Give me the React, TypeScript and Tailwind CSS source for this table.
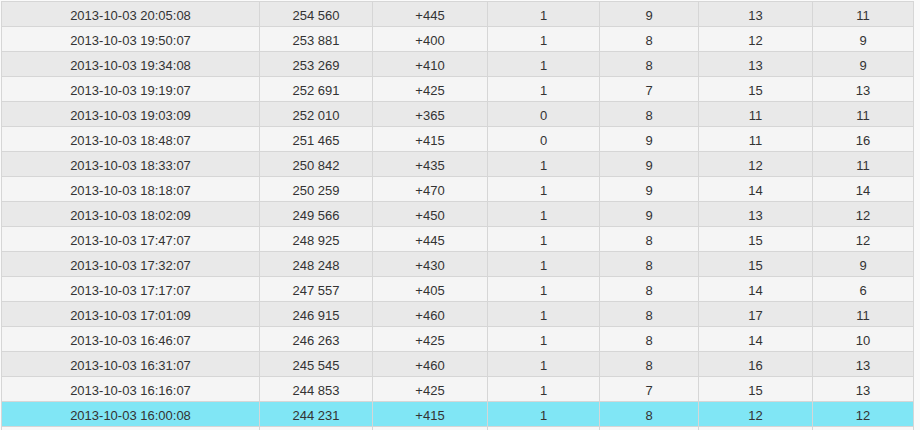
const ROWS: string[][] = [
  ["2013-10-03 20:05:08", "254 560", "+445", "1", "9", "13", "11"],
  ["2013-10-03 19:50:07", "253 881", "+400", "1", "8", "12", "9"],
  ["2013-10-03 19:34:08", "253 269", "+410", "1", "8", "13", "9"],
  ["2013-10-03 19:19:07", "252 691", "+425", "1", "7", "15", "13"],
  ["2013-10-03 19:03:09", "252 010", "+365", "0", "8", "11", "11"],
  ["2013-10-03 18:48:07", "251 465", "+415", "0", "9", "11", "16"],
  ["2013-10-03 18:33:07", "250 842", "+435", "1", "9", "12", "11"],
  ["2013-10-03 18:18:07", "250 259", "+470", "1", "9", "14", "14"],
  ["2013-10-03 18:02:09", "249 566", "+450", "1", "9", "13", "12"],
  ["2013-10-03 17:47:07", "248 925", "+445", "1", "8", "15", "12"],
  ["2013-10-03 17:32:07", "248 248", "+430", "1", "8", "15", "9"],
  ["2013-10-03 17:17:07", "247 557", "+405", "1", "8", "14", "6"],
  ["2013-10-03 17:01:09", "246 915", "+460", "1", "8", "17", "11"],
  ["2013-10-03 16:46:07", "246 263", "+425", "1", "8", "14", "10"],
  ["2013-10-03 16:31:07", "245 545", "+460", "1", "8", "16", "13"],
  ["2013-10-03 16:16:07", "244 853", "+425", "1", "7", "15", "13"],
  ["2013-10-03 16:00:08", "244 231", "+415", "1", "8", "12", "12"],
  ["", "", "", "", "", "", ""],
];

const COL_W = ["w-[258px]", "w-[113px]", "w-[115px]", "w-[112px]", "w-[99px]", "w-[114px]", "w-[101px]"];

export default function App() {
  return (
    <div className="w-[920px] h-[430px] overflow-hidden bg-[#fafafa] pt-px pl-px font-['Liberation_Sans',Arial,sans-serif] text-[13px] text-[#333]">
      <div className="w-[913px] border-l border-t border-[#d6d6d6]">
        {ROWS.map((r, i) => {
          const bg = i === 16 ? "bg-[#80e6f5]" : i === 17 ? "bg-[#f8f8f8]" : i % 2 === 0 ? "bg-[#e9e9e9]" : "bg-[#f5f5f5]";
          return (
            <div key={i} className={`flex h-[25px] border-b border-[#d6d6d6] ${bg}`}>
              {r.map((c, j) => (
                <div key={j} className={`${COL_W[j]} shrink-0 border-r border-[#d6d6d6] flex items-center justify-center pt-[2px] leading-none`}>
                  {c}
                </div>
              ))}
            </div>
          );
        })}
      </div>
    </div>
  );
}
